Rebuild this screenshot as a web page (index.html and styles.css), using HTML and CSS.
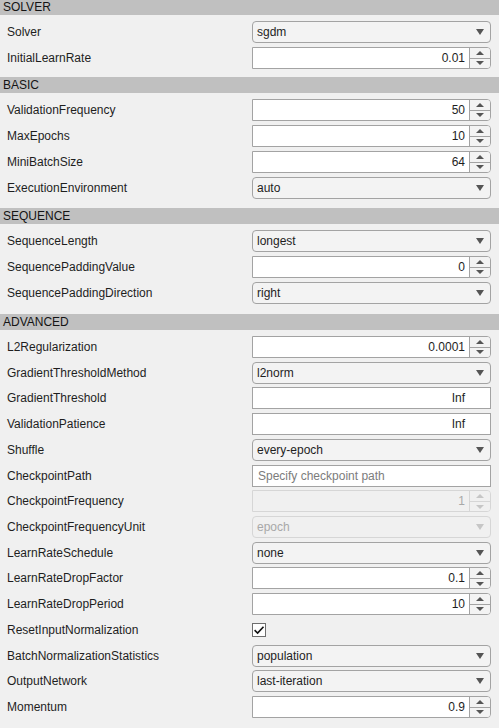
FILE: index.html
```html
<!DOCTYPE html>
<html>
<head>
<meta charset="utf-8">
<link rel="stylesheet" href="styles.css">
</head>
<body>
<div class="panel">
  <section class="sec sec-solver">
    <div class="hdr">SOLVER</div>
    <div class="rows">
      <div class="row"><span class="lbl">Solver</span><div class="dd"><span>sgdm</span><i class="tri"></i></div></div>
      <div class="row"><span class="lbl">InitialLearnRate</span><div class="spin"><span class="val">0.01</span><div class="btns"><span class="b"><i class="up"></i></span><span class="b dnb"><i class="dn"></i></span></div></div></div>
    </div>
  </section>

  <section class="sec sec-basic">
    <div class="hdr">BASIC</div>
    <div class="rows">
      <div class="row"><span class="lbl">ValidationFrequency</span><div class="spin"><span class="val">50</span><div class="btns"><span class="b"><i class="up"></i></span><span class="b dnb"><i class="dn"></i></span></div></div></div>
      <div class="row"><span class="lbl">MaxEpochs</span><div class="spin"><span class="val">10</span><div class="btns"><span class="b"><i class="up"></i></span><span class="b dnb"><i class="dn"></i></span></div></div></div>
      <div class="row"><span class="lbl">MiniBatchSize</span><div class="spin"><span class="val">64</span><div class="btns"><span class="b"><i class="up"></i></span><span class="b dnb"><i class="dn"></i></span></div></div></div>
      <div class="row"><span class="lbl">ExecutionEnvironment</span><div class="dd"><span>auto</span><i class="tri"></i></div></div>
    </div>
  </section>

  <section class="sec sec-sequence">
    <div class="hdr">SEQUENCE</div>
    <div class="rows">
      <div class="row"><span class="lbl">SequenceLength</span><div class="dd"><span>longest</span><i class="tri"></i></div></div>
      <div class="row"><span class="lbl">SequencePaddingValue</span><div class="spin"><span class="val">0</span><div class="btns"><span class="b"><i class="up"></i></span><span class="b dnb"><i class="dn"></i></span></div></div></div>
      <div class="row"><span class="lbl">SequencePaddingDirection</span><div class="dd"><span>right</span><i class="tri"></i></div></div>
    </div>
  </section>

  <section class="sec sec-advanced">
    <div class="hdr">ADVANCED</div>
    <div class="rows tight">
      <div class="row"><span class="lbl">L2Regularization</span><div class="spin"><span class="val">0.0001</span><div class="btns"><span class="b"><i class="up"></i></span><span class="b dnb"><i class="dn"></i></span></div></div></div>
      <div class="row"><span class="lbl">GradientThresholdMethod</span><div class="dd"><span>l2norm</span><i class="tri"></i></div></div>
      <div class="row"><span class="lbl">GradientThreshold</span><div class="field"><span class="val">Inf</span></div></div>
      <div class="row"><span class="lbl">ValidationPatience</span><div class="field"><span class="val">Inf</span></div></div>
      <div class="row"><span class="lbl">Shuffle</span><div class="dd"><span>every-epoch</span><i class="tri"></i></div></div>
      <div class="row"><span class="lbl">CheckpointPath</span><div class="field left"><span class="ph">Specify checkpoint path</span></div></div>
      <div class="row"><span class="lbl">CheckpointFrequency</span><div class="spin disabled"><span class="val">1</span><div class="btns"><span class="b"><i class="up"></i></span><span class="b dnb"><i class="dn"></i></span></div></div></div>
      <div class="row"><span class="lbl">CheckpointFrequencyUnit</span><div class="dd disabled"><span>epoch</span><i class="tri"></i></div></div>
      <div class="row"><span class="lbl">LearnRateSchedule</span><div class="dd"><span>none</span><i class="tri"></i></div></div>
      <div class="row"><span class="lbl">LearnRateDropFactor</span><div class="spin"><span class="val">0.1</span><div class="btns"><span class="b"><i class="up"></i></span><span class="b dnb"><i class="dn"></i></span></div></div></div>
      <div class="row"><span class="lbl">LearnRateDropPeriod</span><div class="spin"><span class="val">10</span><div class="btns"><span class="b"><i class="up"></i></span><span class="b dnb"><i class="dn"></i></span></div></div></div>
      <div class="row"><span class="lbl">ResetInputNormalization</span><div class="chkwrap"><span class="chk"><svg width="12" height="12" viewBox="0 0 12 12"><path d="M1.6 6.2 L4.6 9.1 L10.5 2.7" fill="none" stroke="#111" stroke-width="1.6"/></svg></span></div></div>
      <div class="row"><span class="lbl">BatchNormalizationStatistics</span><div class="dd"><span>population</span><i class="tri"></i></div></div>
      <div class="row"><span class="lbl">OutputNetwork</span><div class="dd"><span>last-iteration</span><i class="tri"></i></div></div>
      <div class="row"><span class="lbl">Momentum</span><div class="spin"><span class="val">0.9</span><div class="btns"><span class="b"><i class="up"></i></span><span class="b dnb"><i class="dn"></i></span></div></div></div>
    </div>
  </section>
</div>
</body>
</html>
```
FILE: styles.css
```css
html, body {
  margin: 0;
  padding: 0;
  background: #f0f0f0;
}
body {
  font-family: "Liberation Sans", Arial, Helvetica, sans-serif;
  font-size: 12px;
  color: #1e1e1e;
  width: 499px;
  height: 728px;
  overflow: hidden;
}
.panel {
  display: flex;
  flex-direction: column;
}
.sec {
  display: flex;
  flex-direction: column;
}
.sec-solver { margin-top: -1px; }
.sec-basic { margin-top: 8px; }
.sec-sequence { margin-top: 9px; }
.sec-advanced { margin-top: 10px; }
.hdr {
  height: 16px;
  line-height: 16px;
  background: #c0c0c0;
  color: #141414;
  padding-left: 3px;
  margin-bottom: 6px;
}
.rows {
  display: flex;
  flex-direction: column;
  gap: 4px;
}
.rows.tight {
  gap: 3.72px;
}
.row {
  display: grid;
  grid-template-columns: 1fr 239px;
  height: 22px;
  padding: 0 8px 0 7px;
  align-items: center;
}
.lbl {
  white-space: nowrap;
}
.dd {
  box-sizing: border-box;
  height: 22px;
  border: 1px solid #a3a3a3;
  border-radius: 4px;
  background: #f3f3f3;
  display: flex;
  align-items: center;
  justify-content: space-between;
  padding: 0 6px 0 4px;
  color: #1e1e1e;
}
.tri {
  width: 0;
  height: 0;
  border-left: 4px solid transparent;
  border-right: 4px solid transparent;
  border-top: 6px solid #555;
}
.spin {
  box-sizing: border-box;
  height: 22px;
  display: flex;
  border: 1px solid #a3a3a3;
  border-radius: 0 4px 4px 0;
  background: #fff;
}
.spin .val {
  flex: 1;
  text-align: right;
  padding-right: 4px;
  line-height: 20px;
}
.btns {
  width: 20px;
  border-left: 1px solid #a3a3a3;
  display: flex;
  flex-direction: column;
  background: #f3f3f3;
  border-radius: 0 3px 3px 0;
}
.b {
  flex: 1;
  display: flex;
  align-items: center;
  justify-content: center;
}
.dnb {
  border-top: 1px solid #a3a3a3;
}
.up {
  width: 0; height: 0;
  border-left: 4px solid transparent;
  border-right: 4px solid transparent;
  border-bottom: 4px solid #555;
}
.dn {
  width: 0; height: 0;
  border-left: 4px solid transparent;
  border-right: 4px solid transparent;
  border-top: 4px solid #555;
}
.field {
  box-sizing: border-box;
  height: 22px;
  border: 1px solid #a3a3a3;
  background: #fff;
  display: flex;
  align-items: center;
  justify-content: flex-end;
  padding: 0 25px 0 4px;
}
.field.left {
  justify-content: flex-start;
  padding-left: 5px;
}
.ph {
  color: #7c7c7c;
}
.disabled {
  border-color: #d6d6d6;
  background: #f0f0f0;
  color: #a8a8a8;
}
.disabled .btns {
  border-left-color: #d6d6d6;
  background: #f0f0f0;
}
.disabled .dnb { border-top-color: #d6d6d6; }
.disabled .up { border-bottom-color: #c6c6c6; }
.disabled .dn { border-top-color: #c6c6c6; }
.disabled .tri { border-top-color: #c6c6c6; }
.disabled .val { color: #a8a8a8; }
.spin.disabled { background: #f0f0f0; }
.chkwrap {
  display: flex;
  align-items: center;
}
.chk {
  box-sizing: border-box;
  width: 14px;
  height: 14px;
  border: 1px solid #6e6e6e;
  background: #fff;
  display: flex;
  align-items: center;
  justify-content: center;
}
```
